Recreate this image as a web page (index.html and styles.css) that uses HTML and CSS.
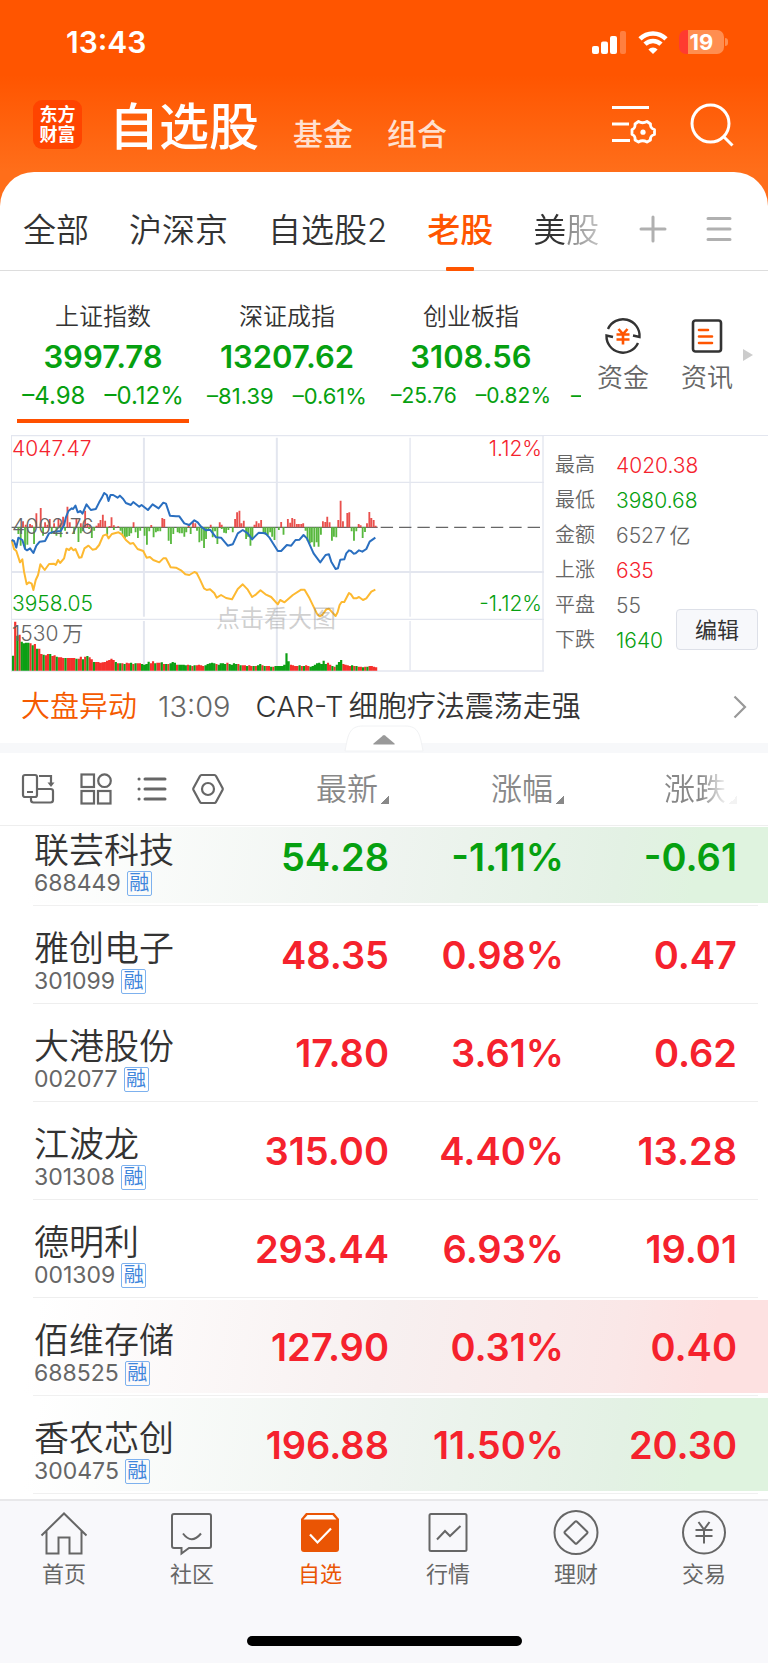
FILE: index.html
```html
<!DOCTYPE html>
<html lang="zh-CN">
<head>
<meta charset="utf-8">
<meta name="viewport" content="width=device-width, initial-scale=1">
<title>自选股</title>
<link rel="stylesheet" href="styles.css">
</head>
<body>
<div class="app">
  <header class="header">
    <div class="status">
      <time class="clock">13:43</time>
      <div class="status-icons">
        <svg class="signal" viewBox="0 0 35 23" aria-hidden="true"><g fill="#fff"><rect x="0" y="15" width="7" height="8" rx="2"/><rect x="9" y="10.500" width="7" height="12.500" rx="2"/><rect x="18" y="5" width="7" height="18" rx="2"/><rect x="28" y="0" width="6" height="23" rx="2" opacity=".25"/></g></svg>
        <svg class="wifi" viewBox="0 0 30 23" aria-hidden="true"><g fill="none" stroke="#fff" stroke-width="4.600"><path d="M2 7.800a18.500 18.500 0 0 1 26 0"/><path d="M7 13.200a11.500 11.500 0 0 1 16 0"/></g><path d="M15 23l-4.600-4.600a6.600 6.600 0 0 1 9.200 0z" fill="#fff"/></svg>
        <div class="battery"><span class="battery-level">19</span></div>
      </div>
    </div>
    <div class="nav">
      <div class="logo"><span>东方</span><span>财富</span></div>
      <nav class="sections">
        <a class="section section-current" href="#stocks">自选股</a>
        <a class="section" href="#funds">基金</a>
        <a class="section" href="#portfolio">组合</a>
      </nav>
      <button class="icon-button" type="button" aria-label="设置">
        <svg width="44" height="40" viewBox="0 0 44 40" fill="none" stroke="#fff" stroke-width="3"><path d="M0 2.500h37M0 19h17M0 35.500h18"/><path d="M26.500 16.500q4 2.500 8.500 0l3.500 2.500q-.5 4.500 4 5.500v5q-4.500 1-4 5.500l-3.500 2q-4.500-2.500-8.500 0l-3.500-2q.5-4.500-3-5.500v-5q3.500-1 3-5.500z" stroke-linejoin="round" stroke-width="2.800"/><circle cx="31" cy="27.200" r="2.600" fill="#fff" stroke="none"/></svg>
      </button>
      <button class="icon-button" type="button" aria-label="搜索">
        <svg width="44" height="44" viewBox="0 0 44 44" fill="none" stroke="#fff" stroke-width="3"><circle cx="20.500" cy="20.500" r="18.500"/><path d="M33 33l9.500 9.500"/></svg>
      </button>
    </div>
  </header>

  <main class="panel">
    <nav class="tabs">
      <a class="tab" href="#all">全部</a>
      <a class="tab" href="#cn">沪深京</a>
      <a class="tab" href="#g2">自选股2</a>
      <a class="tab tab-active" href="#old">老股</a>
      <a class="tab tab-fade" href="#us">美股</a>
      <div class="tab-tools">
        <button class="icon-button" type="button" aria-label="添加"><svg width="28" height="28" viewBox="0 0 28 28" stroke="#b0b0b0" stroke-width="3" stroke-linecap="round"><path d="M2 14h24M14 2v24"/></svg></button>
        <button class="icon-button" type="button" aria-label="分组"><svg width="26" height="28" viewBox="0 0 26 28" stroke="#b0b0b0" stroke-width="3" stroke-linecap="round"><path d="M2 3.500h22M2 14h22M2 24.500h22"/></svg></button>
      </div>
    </nav>

    <section class="summary">
      <div class="indices">
        <div class="index index-active"><span class="index-name">上证指数</span><strong class="index-value">3997.78</strong><span class="index-change change-24"><span>–4.98</span><span>–0.12%</span></span></div>
        <div class="index"><span class="index-name">深证成指</span><strong class="index-value">13207.62</strong><span class="index-change change-22"><span>–81.39</span><span>–0.61%</span></span></div>
        <div class="index"><span class="index-name">创业板指</span><strong class="index-value">3108.56</strong><span class="index-change change-21"><span>–25.76</span><span>–0.82%</span></span></div>
        <div class="index index-next"><span class="index-change change-21"><span>–</span></span></div>
      </div>
      <div class="quick">
        <a class="quick-link" href="#money">
          <svg width="38" height="38" viewBox="0 0 38 38" fill="none" stroke="#333" stroke-width="2.400"><path d="M4 12A16.500 16.500 0 0 1 35.500 20L29 18.500"/><path d="M34 26A16.500 16.500 0 0 1 2.500 18.500L9 20"/><path d="M14.500 12l4.500 5 4.500-5M12.500 17.500h13M12.500 22.500h13M19 17v10.500" stroke="#ff5500" stroke-width="2.600"/></svg>
          <span>资金</span></a>
        <a class="quick-link" href="#news">
          <svg width="38" height="38" viewBox="0 0 38 38" fill="none" stroke="#333" stroke-width="2.600"><rect x="5" y="3.500" width="28" height="31" rx="2.500"/><path d="M11 13h9M11 19.500h13M11 26h13" stroke="#ff5500" stroke-linecap="round"/></svg>
          <span>资讯</span></a>
        <svg class="quick-more" width="10" height="12" viewBox="0 0 10 12" aria-hidden="true"><path d="M0 0l10 6-10 6z" fill="#ccc"/></svg>
      </div>
    </section>

    <section class="market">
      <div class="chart">
        <svg class="chart-plot" viewBox="36 30 1596 711" preserveAspectRatio="none" aria-label="分时图">
          <g fill="none" stroke="#e3e6ef">
            <path stroke-width="6" d="M36 30v708"/>
            <path stroke-width="4" d="M36 32h1596M36 583h1596M36 738h1596M1629 30v708"/>
            <path stroke-width="4" d="M36 172h1596"/>
            <path stroke-width="6" d="M36 441h1596M832 38v537M832 588v148M434 38v537M434 588v148"/>
            <path stroke-width="4" d="M1231 38v537M1231 588v148"/>
          </g>
          <path stroke="#666" stroke-width="4" d="M38 307h1096"/>
          <path stroke="#666" stroke-width="4" stroke-dasharray="37 18" d="M1143 307h480"/>
          <path id="flow-up" stroke="#e9504d" stroke-width="5.500"/>
          <path id="flow-down" stroke="#58b83e" stroke-width="5.500"/>
          <path id="vol-up" stroke="#f5302c" stroke-width="6.500"/>
          <path id="vol-down" stroke="#0c9f14" stroke-width="6.500"/>
          <polyline id="line-avg" fill="none" stroke="#fdb931" stroke-width="6" stroke-linejoin="round"/>
          <polyline id="line-price" fill="none" stroke="#2a6fc0" stroke-width="6" stroke-linejoin="round"/>
        </svg>
        <span class="mark mark-top up">4047.47</span>
        <span class="mark mark-top mark-right up">1.12%</span>
        <span class="mark mark-mid">4002.76</span>
        <span class="mark mark-low down">3958.05</span>
        <span class="mark mark-low mark-right down">-1.12%</span>
        <span class="mark mark-volume">1530&#8201;万</span>
        <span class="hint">点击看大图</span>
      </div>
      <div class="stats">
        <dl class="stat-list">
          <div class="stat"><dt>最高</dt><dd class="up">4020.38</dd></div>
          <div class="stat"><dt>最低</dt><dd class="down">3980.68</dd></div>
          <div class="stat"><dt>金额</dt><dd>6527&#8201;亿</dd></div>
          <div class="stat"><dt>上涨</dt><dd class="up">635</dd></div>
          <div class="stat"><dt>平盘</dt><dd>55</dd></div>
          <div class="stat"><dt>下跌</dt><dd class="down">1640</dd></div>
        </dl>
        <button class="edit" type="button">编辑</button>
      </div>
    </section>

    <a class="news" href="#alert">
      <span class="news-tag">大盘异动</span>
      <time class="news-time">13:09</time>
      <span class="news-title">CAR-T&#8201;细胞疗法震荡走强</span>
      <svg width="14" height="24" viewBox="0 0 14 24" fill="none" stroke="#999" stroke-width="2.200"><path d="M1.500 1.500L12 12 1.500 22.500"/></svg>
    </a>
    <div class="divider">
      <button class="collapse" type="button" aria-label="收起"><svg width="80" height="27" viewBox="0 0 80 27"><path d="M1 26C4 10 5 1 19 1h42c14 0 15 9 18 25z" fill="#fff" stroke="#f1f2f4"/><path d="M29.500 19.500q-.5-.5 0-1l9.500-8q1-.8 2 0l9.500 8q.5.5 0 1z" fill="#999"/></svg></button>
    </div>

    <table class="quotes">
      <colgroup><col><col class="col-price"><col class="col-change"><col class="col-last"></colgroup>
      <thead>
        <tr>
          <th scope="col">
            <div class="tools">
              <button class="icon-button" type="button" aria-label="横屏"><svg width="34" height="32" viewBox="0 0 34 32" fill="none" stroke="#666" stroke-width="2.200"><path d="M10 24v3q0 2.500 2.500 2.500h17q2.500 0 2.500-2.500V18q0-2-2.500-2H17"/><rect x="2" y="2" width="14" height="22" rx="2"/><path d="M6 19h6M18 3h12v8"/><path d="M26.500 9.500h7L30 14z" fill="#666" stroke="none"/></svg></button>
              <button class="icon-button" type="button" aria-label="宫格"><svg width="32" height="32" viewBox="0 0 32 32" fill="none" stroke="#666" stroke-width="2.200"><rect x="1.500" y="1.500" width="12.500" height="12.500"/><circle cx="24.500" cy="7.700" r="6.300"/><rect x="1.500" y="18" width="12.500" height="12.500"/><rect x="18" y="18" width="12.500" height="12.500"/></svg></button>
              <button class="icon-button" type="button" aria-label="列表"><svg width="30" height="26" viewBox="0 0 30 26" stroke="#666" stroke-width="3" stroke-linecap="round"><path d="M8 3h20M8 13h20M8 23h20M2 3h.1M2 13h.1M2 23h.1"/></svg></button>
              <button class="icon-button" type="button" aria-label="指标"><svg width="32" height="32" viewBox="0 0 32 32" fill="none" stroke="#666" stroke-width="2.200"><path d="M9.500 2h13q1 0 1.500 1l6.500 12q.5 1 0 2L24 29q-.5 1-1.500 1h-13q-1 0-1.500-1L1.500 17q-.5-1 0-2L8 3q.5-1 1.500-1z"/><circle cx="16" cy="16" r="6"/></svg></button>
            </div>
          </th>
          <th scope="col"><button class="sort" type="button">最新</button></th>
          <th scope="col"><button class="sort" type="button">涨幅</button></th>
          <th scope="col"><button class="sort sort-fade" type="button">涨跌</button></th>
        </tr>
      </thead>
      <tbody>
        <tr class="row-cut tint-down down"><td><span class="name">联芸科技</span><span class="code">688449<i class="badge">融</i></span></td><td>54.28</td><td>-1.11%</td><td>-0.61</td></tr>
        <tr class="up"><td><span class="name">雅创电子</span><span class="code">301099<i class="badge">融</i></span></td><td>48.35</td><td>0.98%</td><td>0.47</td></tr>
        <tr class="up"><td><span class="name">大港股份</span><span class="code">002077<i class="badge">融</i></span></td><td>17.80</td><td>3.61%</td><td>0.62</td></tr>
        <tr class="up"><td><span class="name">江波龙</span><span class="code">301308<i class="badge">融</i></span></td><td>315.00</td><td>4.40%</td><td>13.28</td></tr>
        <tr class="up"><td><span class="name">德明利</span><span class="code">001309<i class="badge">融</i></span></td><td>293.44</td><td>6.93%</td><td>19.01</td></tr>
        <tr class="tint-up up"><td><span class="name">佰维存储</span><span class="code">688525<i class="badge">融</i></span></td><td>127.90</td><td>0.31%</td><td>0.40</td></tr>
        <tr class="tint-down up"><td><span class="name">香农芯创</span><span class="code">300475<i class="badge">融</i></span></td><td>196.88</td><td>11.50%</td><td>20.30</td></tr>
      </tbody>
    </table>
  </main>

  <footer class="footer">
    <nav class="tabbar">
      <a class="tabbar-item" href="#home"><svg width="48" height="48" viewBox="0 0 48 48" fill="none" stroke="#666" stroke-width="2"><path d="M1.500 26.500L24 4.500l22.500 22M6.500 22v22.500h12V28.500h11v16h12V22"/></svg>首页</a>
      <a class="tabbar-item" href="#community"><svg width="48" height="48" viewBox="0 0 48 48" fill="none" stroke="#666" stroke-width="2"><path d="M6 5h35q2 0 2 2v30q0 2-2 2H21l-7.500 5.500V39H6q-2 0-2-2V7q0-2 2-2z"/><path d="M15 24.500q8.500 11.500 18 0"/></svg>社区</a>
      <a class="tabbar-item tabbar-current" href="#watch"><svg width="48" height="48" viewBox="0 0 48 48"><path d="M10 4h28l5 6v30q0 3-3 3H8q-3 0-3-3V10z" fill="#ea5504"/><path d="M11.500 6h25l4 4.500h-33z" fill="#fff"/><path d="M14 25.500l7.500 8 13.500-14" fill="none" stroke="#fff" stroke-width="2.200"/></svg>自选</a>
      <a class="tabbar-item" href="#market"><svg width="48" height="48" viewBox="0 0 48 48" fill="none" stroke="#666" stroke-width="2"><rect x="5.500" y="5" width="37" height="37" rx="1.500"/><path d="M13 30.500l8-8.500 5 5 10.500-10"/></svg>行情</a>
      <a class="tabbar-item" href="#wealth"><svg width="48" height="48" viewBox="0 0 48 48" fill="none" stroke="#666" stroke-width="2"><circle cx="24" cy="23.500" r="21.500"/><path d="M23 12.700q1-1 2 0L35 22.500q1 1 0 2L25 34.300q-1 1-2 0L13 24.500q-1-1 0-2z"/></svg>理财</a>
      <a class="tabbar-item" href="#trade"><svg width="48" height="48" viewBox="0 0 48 48" fill="none" stroke="#666" stroke-width="2"><circle cx="24" cy="23.500" r="21"/><path d="M18.500 13l5.500 7.500 5.500-7.500M15.500 21h17M15.500 27h17M24 20.500v14"/></svg>交易</a>
    </nav>
    <div class="home-indicator"></div>
  </footer>
</div>
<script src="chart.js"></script>
</body>
</html>
```
FILE: styles.css
```css
* { box-sizing: border-box; }

body {
  margin: 0;
  background: #fff;
  color: #333;
  font-family: Inter, "Noto Sans CJK SC", sans-serif;
}

a { color: inherit; text-decoration: none; }
button { font: inherit; color: inherit; padding: 0; border: 0; background: none; }
svg { display: block; }
.up { color: #f5222d; }
.down { color: #06a010; }

.app {
  min-height: 100vh;
  display: flex;
  flex-direction: column;
  background: linear-gradient(#ff5500 75px, #ff6e1a 171px, #ff6e1a 240px, #fff 240px);
}

/* Header */
.status {
  height: 84px;
  padding: 0 44px 0 66px;
  display: flex;
  align-items: center;
  justify-content: space-between;
  color: #fff;
}
.clock { font-size: 30px; font-weight: 600; }
.status-icons { display: flex; align-items: center; gap: 11px; }
.signal { width: 35px; height: 23px; }
.wifi { width: 30px; height: 23px; }
.battery {
  position: relative;
  width: 45px;
  height: 24px;
  border-radius: 7px;
  background: linear-gradient(90deg, #ff3b30 9px, #ff8e50 9px);
  font-size: 22px;
  line-height: 24px;
  font-weight: 700;
  text-align: center;
}
.battery::after {
  content: "";
  position: absolute;
  left: 46px;
  top: 8px;
  width: 3px;
  height: 8px;
  border-radius: 0 3px 3px 0;
  background: #ff8e50;
}
.nav {
  height: 88px;
  padding: 0 34px 7px 33px;
  display: flex;
  align-items: center;
  color: #fff;
}
.logo {
  width: 49px;
  height: 49px;
  border-radius: 9px;
  background: #ff4400;
  display: flex;
  flex-direction: column;
  justify-content: center;
  align-items: center;
  font-size: 18px;
  line-height: 20px;
  font-weight: 700;
}
.sections {
  flex: 1;
  margin-left: 27px;
  padding-top: 12px;
  display: flex;
  align-items: baseline;
  gap: 34px;
}
.section { font-size: 30px; line-height: 68px; font-weight: 500; color: #ffe0d0; }
.section-current { font-size: 50px; font-weight: 500; color: #fff; }
.nav .icon-button + .icon-button { margin-left: 34px; }

/* Panel and group tabs */
.panel { flex: 1; background: #fff; border-radius: 34px 34px 0 0; }
.tabs {
  height: 99px;
  padding: 0 36px 0 23px;
  border-bottom: 1px solid #ddd;
  display: flex;
  gap: 40px;
  font-size: 33px;
  line-height: 116px;
}
.tab { white-space: nowrap; font-weight: 350; }
.tab-active { position: relative; color: #ff5500; font-weight: 500; }
.tab-active::after {
  content: "";
  position: absolute;
  left: calc(50% - 14px);
  bottom: -1px;
  width: 28px;
  height: 4px;
  border-radius: 1px;
  background: #ff5500;
}
.tab-fade {
  background: linear-gradient(90deg, #333 48%, #888 52%, #c4c4c4);
  background-clip: text;
  color: transparent;
}
.tab-tools {
  flex: 1;
  padding-top: 16px;
  display: flex;
  align-items: center;
  gap: 39px;
}

/* Index summary */
.summary { height: 164px; display: flex; }
.indices { flex: 1; min-width: 0; overflow: hidden; padding-left: 11px; display: flex; }
.index {
  position: relative;
  flex: 0 0 184px;
  padding-top: 28px;
  display: flex;
  flex-direction: column;
  align-items: center;
  color: #06a010;
}
.index-name { font-size: 24px; line-height: 36px; font-weight: 350; color: #333; }
.index-value { font-size: 31px; line-height: 44px; font-weight: 600; }
.index-change { display: flex; gap: 19px; line-height: 34px; white-space: nowrap; }
.change-24 { font-size: 24px; }
.change-22 { font-size: 22px; }
.change-21 { font-size: 21px; }
.index-active::after {
  content: "";
  position: absolute;
  left: 6px;
  right: 6px;
  bottom: 12px;
  height: 4px;
  background: #ff5000;
}
.index-next { padding: 108px 0 0 8px; align-items: flex-start; }
.quick { position: relative; padding: 46px 19px 0 0; display: flex; }
.quick-link {
  width: 84px;
  display: flex;
  flex-direction: column;
  align-items: center;
  font-size: 26px;
  line-height: 46px;
  font-weight: 350;
  color: #666;
}
.quick-more { position: absolute; right: 15px; top: 78px; }

/* Intraday chart */
.market { display: flex; padding-left: 11px; height: 237px; }
.chart { position: relative; flex: 1; min-width: 0; }
.chart-plot { width: 100%; height: 237px; }
.mark { position: absolute; left: 1px; font-size: 21px; line-height: 24px; font-weight: 350; color: #666; }
.mark-right { left: auto; right: 2px; }
.mark.up { color: #f5222d; }
.mark.down { color: #06a010; }
.mark-top { top: 2px; }
.mark-mid { top: 80px; }
.mark-low { top: 157px; }
.mark-volume { top: 187px; }
.hint { position: absolute; left: 205px; top: 166px; font-size: 24px; line-height: 36px; color: rgba(120, 120, 120, .35); }
.stats {
  position: relative;
  width: 224px;
  border-top: 1px solid #e3e6ef;
  padding: 12px 0 0 11px;
}
.stat-list { margin: 0; font-size: 20px; line-height: 35px; font-weight: 350; color: #666; }
.stat { display: flex; gap: 21px; }
.stat dd { margin: 0; font-size: 21px; }
.edit {
  position: absolute;
  right: 10px;
  bottom: 22px;
  width: 82px;
  height: 41px;
  border: 1px solid #dde0e8;
  border-radius: 4px;
  background: #f7f8fb;
  font-size: 22px;
  line-height: 34px;
}

/* News strip */
.news {
  height: 71px;
  padding: 0 21px 2px 21px;
  display: flex;
  align-items: center;
  font-size: 29px;
  line-height: 40px;
  font-weight: 350;
}
.news-tag { color: #f55a00; }
.news-time { margin-left: 21px; color: #666; }
.news-title { margin-left: 25px; flex: 1; }
.divider { position: relative; height: 10px; background: #f7f8fa; }
.collapse { position: absolute; left: calc(50% - 40px); bottom: 1px; }

/* Quote table */
.quotes { width: 100%; table-layout: fixed; border-collapse: collapse; }
.col-price { width: 160px; }
.col-change { width: 175px; }
.col-last { width: 204px; }
.quotes th { height: 72px; padding: 0; border-bottom: 1px solid #eee; text-align: right; font-weight: 400; }
.quotes th:last-child, .quotes td:last-child { padding-right: 31px; }
.tools { display: flex; align-items: center; justify-content: space-between; padding: 0 5px 0 21px; }
.sort { display: inline-flex; align-items: flex-end; gap: 3px; font-size: 31px; line-height: 44px; font-weight: 350; color: #888; }
.sort::after {
  content: "";
  width: 8px;
  height: 8px;
  margin-bottom: 7px;
  background: linear-gradient(135deg, transparent 50%, #888 50%);
}
.sort-fade { -webkit-mask-image: linear-gradient(90deg, #000 50%, rgba(0, 0, 0, .1) 85%); mask-image: linear-gradient(90deg, #000 50%, rgba(0, 0, 0, .1) 85%); }
.quotes tbody tr {
  height: 98px;
  background: linear-gradient(#eee, #eee) 33px 100% / calc(100% - 43px) 1px no-repeat;
}
.quotes .row-cut { height: 81px; }
.quotes .tint-down,
.quotes .tint-up {
  background:
    linear-gradient(#f0f0f0, #f0f0f0) 33px 100% / calc(100% - 43px) 1px no-repeat,
    linear-gradient(#fff, #fff) 0 100% / 100% 3px no-repeat,
    linear-gradient(#fff, #fff) 0 0 / 100% 2px no-repeat,
    var(--tint);
}
.tint-down { --tint: linear-gradient(100deg, #fff 5%, #eff4f0 50%, #e3f1e4 80%, #dff3df 90%); }
.tint-up { --tint: linear-gradient(100deg, #fff 5%, #f7f0f0 50%, #fae7e7 80%, #fde1e1 92%); }
.quotes td {
  padding: 0 0 25px;
  vertical-align: bottom;
  text-align: right;
  font-size: 38px;
  line-height: 48px;
  font-weight: 600;
}
.quotes td:first-child { padding: 0 0 9px 34px; text-align: left; font-weight: 400; }
.name { display: block; font-size: 35px; line-height: 40px; font-weight: 350; color: #333; }
.code { display: flex; align-items: center; gap: 6px; font-size: 23px; line-height: 27px; color: #666; }
.badge {
  width: 25px;
  height: 25px;
  border: 1px solid #7db1ee;
  border-radius: 2px;
  font-style: normal;
  font-size: 20px;
  line-height: 22px;
  text-align: center;
  color: #3f86dc;
}

/* Bottom bar */
.footer {
  height: 164px;
  border-top: 2px solid #e8e8ea;
  background: #f8f8fb;
  display: flex;
  flex-direction: column;
  align-items: center;
  justify-content: space-between;
  padding-bottom: 17px;
}
.tabbar { width: 100%; padding-top: 8px; display: grid; grid-template-columns: repeat(6, 1fr); }
.tabbar-item { display: flex; flex-direction: column; align-items: center; font-size: 22px; line-height: 34px; color: #666; }
.tabbar-current { color: #ea5504; }
.home-indicator { width: 275px; height: 10px; border-radius: 5px; background: #000; }
```
FILE: chart.js
```js
// Coordinates use the plot's viewBox; flow bars grow from the zero line, volume bars from the bottom.
const FLOW_ZERO = 307;
const VOLUME_BASE = 737;

const price = "38,345 45,348 52,368 58,338 70,345 78,372 84,376 93,370 103,384 112,362 122,350 138,348 150,325 165,320 185,318 195,300 200,278 208,258 218,250 222,252 229,242 236,262 244,258 250,266 262,238 275,255 290,252 300,232 307,220 315,204 323,210 328,228 334,210 342,210 355,218 362,212 372,222 380,234 395,240 402,231 420,245 427,240 446,255 460,238 478,250 492,233 500,236 512,272 530,274 540,274 555,295 570,300 585,286 595,292 605,305 620,316 632,314 650,337 665,338 685,362 700,358 715,325 730,315 745,325 758,343 778,323 798,325 810,338 835,378 845,378 862,360 875,362 888,345 900,344 912,330 922,340 942,385 962,412 978,390 988,388 995,410 1008,432 1015,430 1022,404 1034,403 1040,385 1048,376 1054,378 1062,386 1068,385 1078,376 1088,380 1100,372 1110,350 1127,338";
const average = "38,345 45,372 52,378 63,412 70,403 75,440 83,478 90,472 98,476 103,495 110,465 117,450 124,418 137,435 150,417 165,416 170,420 177,405 183,414 195,400 202,371 210,375 216,368 223,376 229,372 240,398 247,397 256,370 268,362 280,374 290,372 300,360 312,332 322,328 328,340 338,327 358,322 368,328 380,345 393,356 402,354 415,372 432,378 442,398 452,396 462,405 480,412 492,400 500,400 514,427 530,428 545,436 558,448 570,450 585,441 592,444 602,464 614,490 622,495 632,493 645,505 652,518 665,510 680,519 698,523 715,492 730,478 745,494 758,516 770,508 783,496 798,508 815,516 835,538 842,525 855,532 880,510 905,494 915,494 930,520 952,566 960,574 968,570 980,553 988,551 998,562 1008,573 1014,562 1020,540 1026,531 1034,531 1048,504 1054,508 1062,520 1070,520 1078,516 1090,525 1100,520 1115,500 1127,494";

const inflow = "72,18 80,8 93,10 99,6 112,42 125,58 138,15 145,8 152,25 165,12 178,25 185,12 192,32 205,62 212,15 232,25 245,12 258,50 265,12 272,8 292,5 298,12 304,22 311,38 318,20 331,4 337,30 344,6 357,3 403,15 456,7 489,28 495,25 568,8 581,15 588,12 634,8 661,15 667,8 707,25 713,45 720,50 726,12 733,20 765,8 771,18 778,12 785,22 845,16 865,25 872,14 878,28 885,25 892,10 898,10 905,10 911,12 970,18 977,16 983,32 990,15 1016,22 1023,80 1030,18 1043,43 1049,45 1077,10 1083,6 1102,12 1109,46 1115,28 1122,22 1128,5";
const outflow = "58,20 65,55 78,65 85,52 105,50 132,25 158,20 172,25 185,30 198,10 225,20 238,44 245,18 251,12 270,5 278,32 285,10 324,22 344,8 364,10 370,22 377,32 383,28 390,26 396,18 409,15 416,32 423,10 436,25 443,52 450,12 463,30 470,15 476,12 483,12 508,40 515,50 522,20 535,15 541,18 548,18 555,28 561,15 574,20 593,10 600,45 607,40 614,62 620,35 627,10 640,30 647,12 654,50 667,5 674,16 680,18 687,8 700,15 740,35 746,28 753,55 759,35 792,20 798,22 805,24 812,15 818,28 825,38 838,8 852,22 918,10 924,40 931,48 937,45 944,58 951,45 957,58 964,22 997,40 1003,28 1010,30 1056,12 1063,40 1070,12 1089,32 1096,14";

const volumes = "-45 147 -105 108 -87 -82 -84 -84 82 -76 80 -66 66 50 -48 46 50 -50 44 46 -42 40 40 38 -38 38 38 38 38 -36 36 42 -34 42 -44 40 34 -26 26 26 24 25 26 30 32 36 32 -26 22 -22 22 -20 24 22 -24 20 -22 22 22 -20 -18 -20 -27 22 28 -22 24 24 -25 20 -20 20 -22 -26 -24 18 -18 -18 -18 -16 18 -16 14 -16 16 18 16 14 -16 -20 -22 -24 -22 20 -18 -22 -22 -20 24 -20 -18 -22 -20 20 -16 16 16 -14 16 14 -14 14 -16 -20 16 -14 14 14 -12 12 -14 -14 -14 -14 -18 -52 -28 18 16 14 14 -16 14 -14 16 14 -12 -14 -18 -22 -24 -20 -30 -20 24 18 -14 12 -18 -26 -32 20 18 16 14 -16 14 -14 12 12 -10 12 -12 14 14 12 10";

const pairs = (text) => text.split(" ").map((p) => p.split(",").map(Number));
const setPath = (id, d) => document.getElementById(id).setAttribute("d", d);

document.getElementById("line-price").setAttribute("points", price);
document.getElementById("line-avg").setAttribute("points", average);
setPath("flow-up", pairs(inflow).map(([x, h]) => `M${x} ${FLOW_ZERO}v${-h}`).join(""));
setPath("flow-down", pairs(outflow).map(([x, h]) => `M${x} ${FLOW_ZERO}v${h}`).join(""));

const values = volumes.split(" ").map(Number);
const step = 1094 / values.length;
const bar = (v, i) => `M${(42 + i * step).toFixed(1)} ${VOLUME_BASE}v${-Math.abs(v)}`;
setPath("vol-up", values.map((v, i) => (v > 0 ? bar(v, i) : "")).join(""));
setPath("vol-down", values.map((v, i) => (v < 0 ? bar(v, i) : "")).join(""));
```
